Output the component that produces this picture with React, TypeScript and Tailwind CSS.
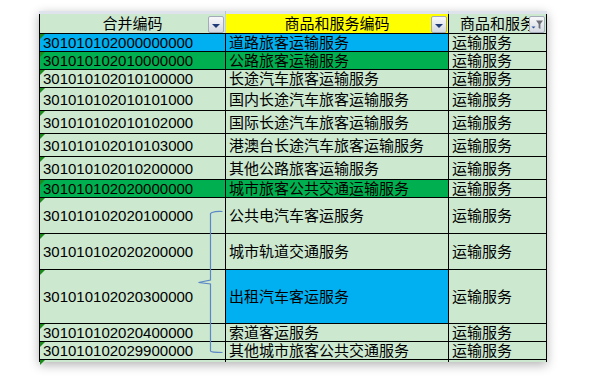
import React from "react";

type Row = {
  code: string;
  name: string;
  h: string;
  c1: string;
  c2: string;
};

const LIGHT = "bg-[#cce8cf]";

const rows: Row[] = [
  { code: "301010102000000000", name: "道路旅客运输服务", h: "h-[18px]", c1: "bg-[#00b0f0]", c2: "bg-[#00b0f0]" },
  { code: "301010102010000000", name: "公路旅客运输服务", h: "h-[18px]", c1: "bg-[#00b050]", c2: "bg-[#00b050]" },
  { code: "301010102010100000", name: "长途汽车旅客运输服务", h: "h-[18px]", c1: LIGHT, c2: LIGHT },
  { code: "301010102010101000", name: "国内长途汽车旅客运输服务", h: "h-[23px]", c1: LIGHT, c2: LIGHT },
  { code: "301010102010102000", name: "国际长途汽车旅客运输服务", h: "h-[23px]", c1: LIGHT, c2: LIGHT },
  { code: "301010102010103000", name: "港澳台长途汽车旅客运输服务", h: "h-[23px]", c1: LIGHT, c2: LIGHT },
  { code: "301010102010200000", name: "其他公路旅客运输服务", h: "h-[23px]", c1: LIGHT, c2: LIGHT },
  { code: "301010102020000000", name: "城市旅客公共交通运输服务", h: "h-[18px]", c1: "bg-[#00b050]", c2: "bg-[#00b050]" },
  { code: "301010102020100000", name: "公共电汽车客运服务", h: "h-[36px]", c1: LIGHT, c2: LIGHT },
  { code: "301010102020200000", name: "城市轨道交通服务", h: "h-[36px]", c1: LIGHT, c2: LIGHT },
  { code: "301010102020300000", name: "出租汽车客运服务", h: "h-[54px]", c1: LIGHT, c2: "bg-[#00b0f0]" },
  { code: "301010102020400000", name: "索道客运服务", h: "h-[18px]", c1: LIGHT, c2: LIGHT },
  { code: "301010102029900000", name: "其他城市旅客公共交通服务", h: "h-[18px]", c1: LIGHT, c2: LIGHT },
];

const FONT = "font-['Liberation_Sans','Noto_Sans_CJK_SC',sans-serif]";

const Tri = () => (
  <span className="absolute left-0 top-0 w-0 h-0 border-t-[5px] border-t-[#1a8a1a] border-r-[5px] border-r-transparent" />
);

const DropBtn = () => (
  <div className="absolute right-[1px] top-[2px] w-[16px] h-[17px] border border-[#a3abb8] rounded-[2px] bg-gradient-to-b from-[#f7f8fa] to-[#d5dae2] flex items-center justify-center">
    <span className="mt-[2px] w-0 h-0 border-l-[4px] border-l-transparent border-r-[4px] border-r-transparent border-t-[4px] border-t-[#203c78]" />
  </div>
);

const FilterBtn = () => (
  <div className="absolute right-[1px] top-[2px] w-[16px] h-[17px] border border-[#a3abb8] rounded-[2px] bg-gradient-to-b from-[#f7f8fa] to-[#d5dae2]">
    <svg width="14" height="15" viewBox="0 0 14 15" className="block">
      <path d="M1.5 9.5h4l-2 2z" fill="#2d4fa0" />
      <path d="M6 3.5h7l-2.6 3.4v5.2l-1.8-1v-4.2z" fill="#6b6f75" />
    </svg>
  </div>
);

export default function App() {
  return (
    <div className={`relative w-[605px] h-[389px] bg-white overflow-hidden pl-[39px] pt-[11px] ${FONT} text-[15px] text-black leading-none`}>
      <div className="w-[508px] shadow-[0_3px_10px_rgba(0,0,0,0.3)]">
        {/* column letter strip */}
        <div className="h-[3px] bg-[#dfe4ec] grid grid-cols-[187px_223px_98px]">
          <div className="border-r border-[#b8c2d0]" />
          <div className="border-r border-[#b8c2d0]" />
          <div />
        </div>
        {/* header */}
        <div className="h-[20px] grid grid-cols-[187px_223px_98px] border-b border-black">
          <div className={`relative ${LIGHT} border-l border-black border-r border-r-[#c8d0d8] flex items-center justify-center`}>
            合并编码
            <DropBtn />
          </div>
          <div className="relative bg-[#ffff00] border-r border-black flex items-center justify-center">
            商品和服务编码
            <DropBtn />
          </div>
          <div className={`relative ${LIGHT} border-r border-black flex items-center justify-center overflow-hidden whitespace-nowrap`}>
            商品和服务
            <FilterBtn />
          </div>
        </div>
        {rows.map((r) => (
          <div key={r.code} className={`${r.h} grid grid-cols-[187px_223px_98px] border-b border-black`}>
            <div className={`relative ${r.c1} border-l border-r border-black flex items-center pl-[3px]`}>
              <Tri />
              {r.code}
            </div>
            <div className={`${r.c2} border-r border-black flex items-center pl-[3px] whitespace-nowrap`}>{r.name}</div>
            <div className={`${LIGHT} border-r border-black flex items-center pl-[3px]`}>运输服务</div>
          </div>
        ))}
        <div className="h-[2px] grid grid-cols-[187px_223px_98px]">
          <div className={`relative ${LIGHT} border-l border-r border-black`}>
            <Tri />
          </div>
          <div className={`${LIGHT} border-r border-black`} />
          <div className={`${LIGHT} border-r border-black`} />
        </div>
      </div>
      {/* brace annotation */}
      <svg className="absolute left-0 top-0 pointer-events-none" width="605" height="389">
        <path
          d="M222.5 211.5 Q216 211 212 212.5 L210.5 213.5 L210.5 280 L198.5 282.5 L210.5 284 L210.5 351 Q211 352.5 222.5 352.5"
          fill="none"
          stroke="#5b87c6"
          strokeWidth="1.2"
        />
      </svg>
    </div>
  );
}
